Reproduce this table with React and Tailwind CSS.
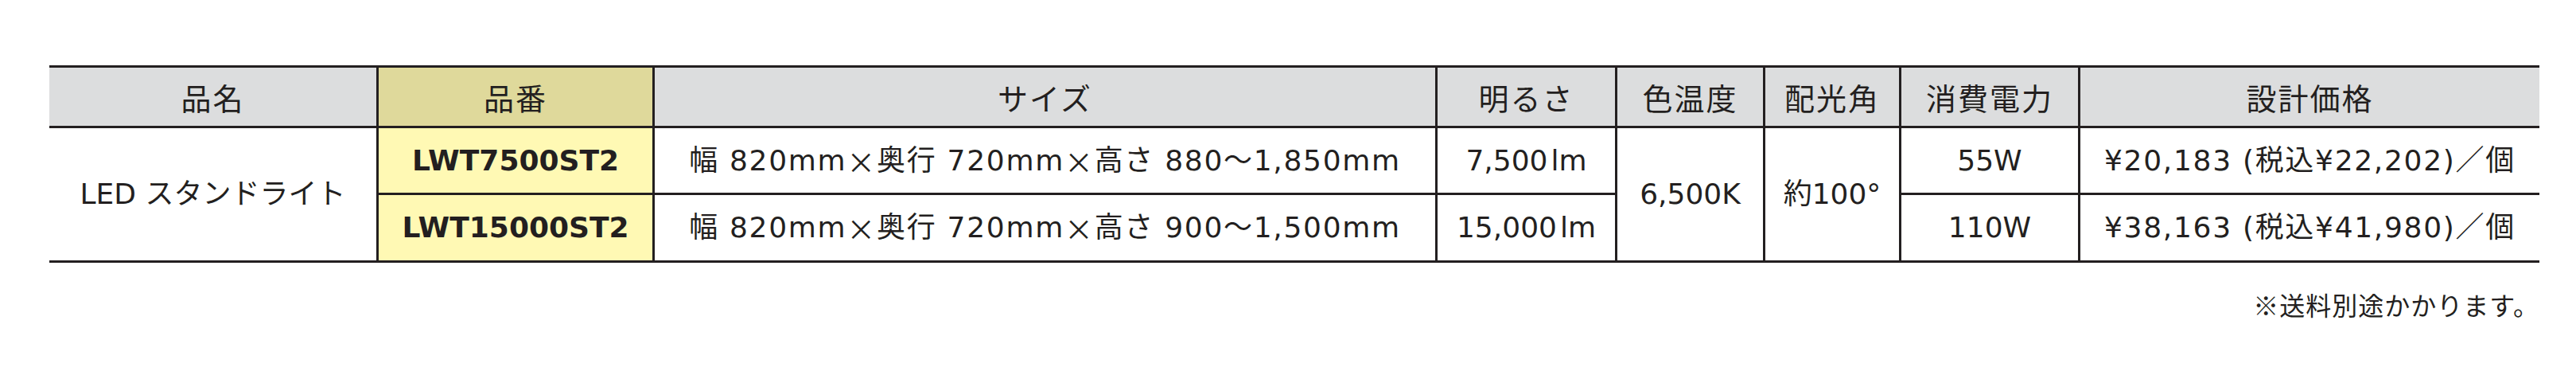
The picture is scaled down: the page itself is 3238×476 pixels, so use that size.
import React from "react";

const font = "font-['DejaVu_Sans','Noto_Sans_CJK_JP',sans-serif]";
const jp = "font-['Noto_Sans_CJK_JP',sans-serif]";

const Cell = ({ children, className = "bg-white" }) => (
  <div
    className={`flex items-center justify-center whitespace-nowrap ${className}`}
  >
    {children}
  </div>
);

const Head = ({ children, className = "bg-[#dcddde]" }) => (
  <Cell className={`${className} ${jp} text-[38px] tracking-[2px]`}>
    {children}
  </Cell>
);

const X = () => <span className={jp}>×</span>;

const App = () => {
  return (
    <div
      className={`w-[3238px] h-[476px] bg-white pl-[62px] pt-[82px] text-[#231f20] ${font}`}
    >
      <div className="w-[3130px]">
        <div className="grid grid-cols-[411px_344px_981px_223px_183px_168px_222px_577px] grid-rows-[73px_81px_82px] gap-[3px] bg-[#231f20] border-y-[3px] border-[#231f20] text-[36px]">
          <Head>品名</Head>
          <Head className="bg-[#dfd99b]">品番</Head>
          <Head>サイズ</Head>
          <Head>明るさ</Head>
          <Head>色温度</Head>
          <Head>配光角</Head>
          <Head>消費電力</Head>
          <Head>設計価格</Head>

          <Cell className="bg-white row-span-2">LED スタンドライト</Cell>
          <Cell className="bg-[#fff9b4] font-bold">LWT7500ST2</Cell>
          <Cell className="bg-white tracking-[1.7px]">
            幅 820mm<X />奥行 720mm<X />高さ 880〜1,850mm
          </Cell>
          <Cell>
            7,500<span className="ml-[4px]">lm</span>
          </Cell>
          <Cell className="bg-white row-span-2">6,500K</Cell>
          <Cell className="bg-white row-span-2">約100°</Cell>
          <Cell>55W</Cell>
          <Cell className="bg-white tracking-[1.7px]">
            ¥20,183 (税込¥22,202)／個
          </Cell>

          <Cell className="bg-[#fff9b4] font-bold">LWT15000ST2</Cell>
          <Cell className="bg-white tracking-[1.7px]">
            幅 820mm<X />奥行 720mm<X />高さ 900〜1,500mm
          </Cell>
          <Cell>
            15,000<span className="ml-[4px]">lm</span>
          </Cell>
          <Cell>110W</Cell>
          <Cell className="bg-white tracking-[1.7px]">
            ¥38,163 (税込¥41,980)／個
          </Cell>
        </div>
        <p className={`mt-[28px] text-right text-[32px] tracking-[1px] ${jp}`}>
          ※送料別途かかります。
        </p>
      </div>
    </div>
  );
};

export default App;
